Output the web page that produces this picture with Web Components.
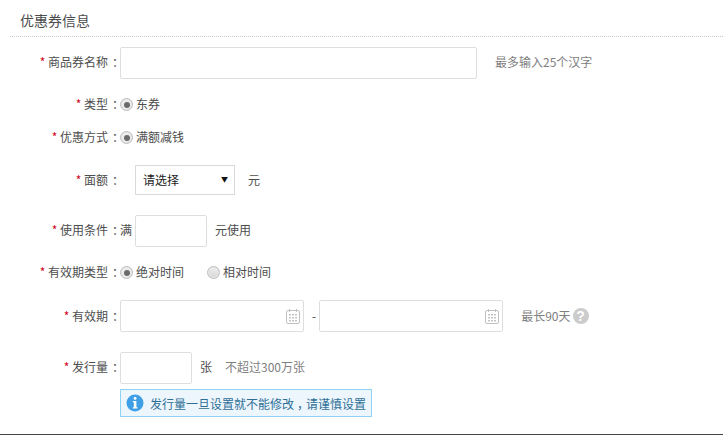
<!DOCTYPE html>
<html><head><meta charset="utf-8">
<style>
html,body{margin:0;padding:0;background:#fff;overflow:hidden;height:435px}
body{font:12px "Noto Sans CJK SC","Liberation Sans",sans-serif;color:#4d4d4d}
</style></head><body>
<template id="t-panel"><style>
:host{display:block;height:434px;border-bottom:1px solid #444;overflow:hidden}
.h{margin-left:10px;padding-left:10px;height:36px;line-height:40px;font-size:14px;color:#4d4d4d;border-bottom:1px dotted #ccc}
.b{display:flex;flex-direction:column}
</style><div class="h"><slot name="title"></slot></div><div class="b"><slot></slot></div></template>

<template id="t-row"><style>
:host{display:flex;align-items:center;margin-top:var(--mt,0);height:var(--h,32px)}
.l{width:120px;flex:none;text-align:right;white-space:nowrap;line-height:17px;padding-bottom:var(--tp,4px);box-sizing:border-box}
.l b{font-weight:normal;color:#d0021b}
.c{display:flex;align-items:center;flex:1;min-width:0}
</style><div class="l"><b>*</b> <slot name="label"></slot></div><div class="c"><slot></slot></div></template>

<template id="t-radio"><style>
:host{display:inline-flex;align-items:center;gap:3px;white-space:nowrap}
i{display:block;width:13px;height:13px;border-radius:50%;box-sizing:border-box;border:1px solid #bdbdbd;background:linear-gradient(#eee,#d6d6d6);position:relative;box-shadow:inset 0 0 0 1px #e6e6e6}
:host([checked]) i{background:#ececec}
:host([checked]) i::after{content:"";position:absolute;left:2.5px;top:2.5px;width:6px;height:6px;border-radius:50%;background:#6a6a6a}
span{padding-bottom:2px}
</style><i></i><span><slot></slot></span></template>

<template id="t-select"><style>
:host{display:flex;flex:none;align-items:center;justify-content:space-between;box-sizing:border-box;width:100px;height:30px;border:1px solid #d9d9d9;padding:0 6px 0 7px;color:#222;background:#fff}
.t{padding-bottom:2px}
.a{font-size:7px;color:#111;line-height:8px;margin-top:-2px}
</style><span class="t"><slot></slot></span><span class="a">▼</span></template>

<template id="t-cal"><style>
:host{display:block;width:14px;height:15px}
</style><svg width="14" height="15" viewBox="0 0 14 15" fill="none"><rect x=".5" y="1.5" width="13" height="13" rx="1.5" stroke="#c0c0c0"/><path d="M3.5 0v3M10.5 0v3" stroke="#c0c0c0"/><path d="M3 5h2v1.500H3zM6 5h2v1.500H6zM9 5h2v1.500H9zM3 8h2v1.500H3zM6 8h2v1.500H6zM9 8h2v1.500H9zM3 11h2v1.500H3zM6 11h2v1.500H6zM9 11h2v1.500H9z" fill="#c4c4c4"/></svg></template>

<template id="t-help"><style>
:host{display:block;width:16px;height:16px;border-radius:50%;background:#ccc;color:#fff;font:bold 14px/16px "Liberation Sans",sans-serif;text-align:center}
</style>?</template>

<template id="t-tip"><style>
:host{display:flex;align-items:center;box-sizing:border-box;width:252px;height:28px;margin-left:120px;margin-top:5px;padding-left:5px;gap:6px;background:#edf6fd;border:1px solid #8fd3f2;color:#2f6f96;white-space:nowrap}
svg{flex:none}
</style><svg width="18" height="18" viewBox="0 0 18 18"><circle cx="9" cy="9" r="8.500" fill="#3f9fe6"/><rect x="7.700" y="3" width="2.800" height="2.800" rx="1.200" fill="#fff"/><path d="M6.800 7h3.600v6.200h1v1.200H6.800v-1.200h1V8.200h-1z" fill="#fff"/></svg><span><slot></slot></span></template>

<coupon-panel>
  <span slot="title">优惠券信息</span>
  <form-row style="--mt:10px;--tp:3px"><span slot="label">商品券名称<p-mark>：</p-mark></span><text-box style="width:357px"></text-box><note-text style="margin-left:18px">最多输入25个汉字</note-text></form-row>
  <form-row style="--mt:17px;--h:17px;--tp:2px"><span slot="label">类型<p-mark>：</p-mark></span><radio-opt checked>东券</radio-opt></form-row>
  <form-row style="--mt:16px;--h:17px;--tp:2px"><span slot="label">优惠方式<p-mark>：</p-mark></span><radio-opt checked>满额减钱</radio-opt></form-row>
  <form-row style="--mt:19px;--h:30px;--tp:2px"><span slot="label">面额<p-mark>：</p-mark></span><pick-box style="margin-left:15px">请选择</pick-box><note-text plain style="margin-left:13px">元</note-text></form-row>
  <form-row style="--mt:20px"><span slot="label">使用条件<p-mark>：</p-mark></span><note-text plain>满</note-text><text-box style="width:72px;margin-left:3px"></text-box><note-text plain style="margin-left:8px">元使用</note-text></form-row>
  <form-row style="--mt:17px;--h:17px;--tp:2px"><span slot="label">有效期类型<p-mark>：</p-mark></span><radio-opt checked>绝对时间</radio-opt><radio-opt style="margin-left:23px">相对时间</radio-opt></form-row>
  <form-row style="--mt:19px;--tp:2px"><span slot="label">有效期<p-mark>：</p-mark></span><text-box style="width:184px"><cal-icon></cal-icon></text-box><note-text plain style="margin:0 3px 0 8px">-</note-text><text-box style="width:184px"><cal-icon></cal-icon></text-box><note-text style="margin-left:18px">最长90天</note-text><help-dot style="margin-left:2px"></help-dot></form-row>
  <form-row style="--mt:20px"><span slot="label">发行量<p-mark>：</p-mark></span><text-box style="width:72px"></text-box><note-text plain style="margin-left:8px">张</note-text><note-text style="margin-left:13px">不超过300万张</note-text></form-row>
  <tip-box>发行量一旦设置就不能修改<p-mark style="--s:3px">，</p-mark>请谨慎设置</tip-box>
</coupon-panel>
<script>
const def=(n,t,init)=>customElements.define(n,class extends HTMLElement{constructor(){super();this.attachShadow({mode:'open'});
 if(t)this.shadowRoot.appendChild(document.getElementById(t).content.cloneNode(true));else init(this.shadowRoot);}});
def('coupon-panel','t-panel');def('form-row','t-row');def('radio-opt','t-radio');def('pick-box','t-select');def('cal-icon','t-cal');def('help-dot','t-help');def('tip-box','t-tip');
def('text-box',null,r=>{r.innerHTML='<style>:host{display:block;flex:none;box-sizing:border-box;height:32px;border:1px solid #dedede;border-radius:2px;background:#fff;position:relative}::slotted(cal-icon){position:absolute;right:3px;top:8px}</style><slot></slot>'});
def('note-text',null,r=>{r.innerHTML='<style>:host{display:block;color:#808080;white-space:nowrap;padding-bottom:var(--tp,4px)}:host([plain]){color:#4d4d4d}</style><slot></slot>'});
def('p-mark',null,r=>{r.innerHTML='<style>:host{display:inline-block;box-sizing:border-box;width:12px;padding-left:var(--s,4px);letter-spacing:calc(0px - var(--s,4px));white-space:nowrap}</style><slot></slot>'});
</script>
</body></html>
